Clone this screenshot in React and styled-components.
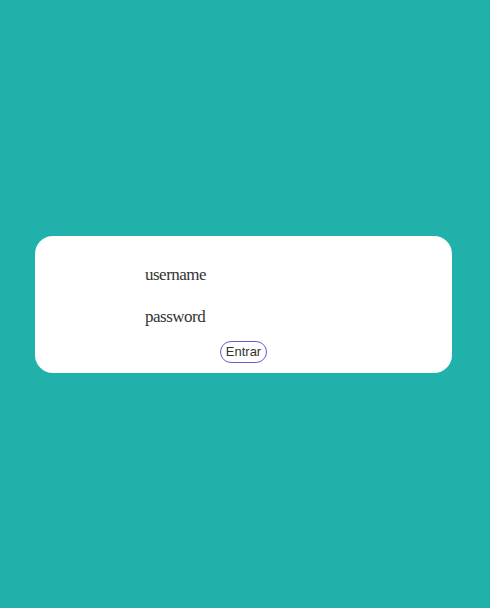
import styled, { createGlobalStyle } from 'styled-components';

const GlobalStyle = createGlobalStyle`
  html, body {
    margin: 0;
    padding: 0;
    background: #20b2aa;
  }
`;

const Page = styled.div`
  min-height: 100vh;
  display: flex;
  align-items: center;
  justify-content: center;
  padding-right: 3px;
  box-sizing: border-box;
`;

const Card = styled.form`
  width: 417px;
  box-sizing: border-box;
  background: #fff;
  border-radius: 18px;
  padding: 29px 0 10px;
  display: flex;
  flex-direction: column;
`;

const Label = styled.label`
  margin-left: 110px;
  margin-bottom: ${({ $gap }) => $gap}px;
  font-family: 'Liberation Serif', serif;
  font-size: 17px;
  letter-spacing: -0.5px;
  color: #333;
  line-height: 20px;
`;

const Button = styled.button`
  align-self: center;
  font-family: 'Liberation Sans', Arial, sans-serif;
  font-size: 13px;
  line-height: 15px;
  color: #333;
  background: #fff;
  border: 1px solid #6a5acd;
  border-radius: 12px;
  padding: 2px 5px 3px;
`;

export default function App() {
  return (
    <>
      <GlobalStyle />
      <Page>
        <Card>
          <Label $gap={22}>username</Label>
          <Label $gap={14}>password</Label>
          <Button type="button">Entrar</Button>
        </Card>
      </Page>
    </>
  );
}
